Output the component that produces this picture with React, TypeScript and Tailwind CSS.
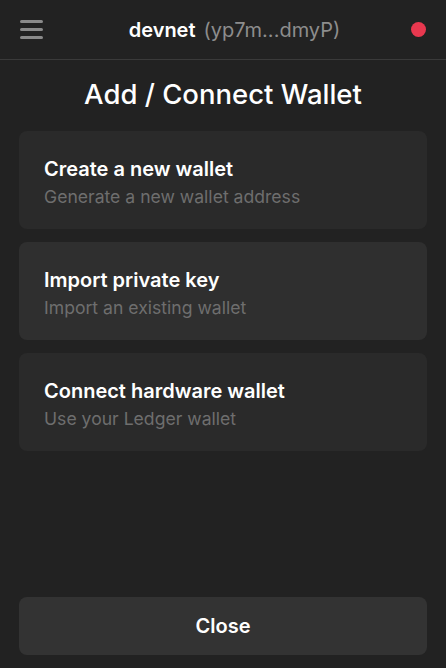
const OPTIONS = [
  { title: 'Create a new wallet', sub: 'Generate a new wallet address', active: false },
  { title: 'Import private key', sub: 'Import an existing wallet', active: true },
  { title: 'Connect hardware wallet', sub: 'Use your Ledger wallet', active: false },
]

export default function App() {
  return (
    <div className="w-[446px] h-[668px] bg-[#222222] flex flex-col text-white" style={{ fontFamily: 'Inter, "Noto Sans", sans-serif' }}>
      {/* Header */}
      <div className="h-[60px] flex items-center px-5 border-b border-[#3a3a3a] relative shrink-0">
        <div className="flex flex-col gap-[5px] w-[23px]">
          <span className="h-[3px] bg-[#8a8a8a] rounded-full" />
          <span className="h-[3px] bg-[#8a8a8a] rounded-full" />
          <span className="h-[3px] bg-[#8a8a8a] rounded-full" />
        </div>
        <div className="flex-1 flex justify-center items-baseline gap-2 pl-[15px]">
          <span className="text-[20px] font-semibold">devnet</span>
          <span className="text-[20px] text-[#8d8d8d]">(yp7m...dmyP)</span>
        </div>
        <span className="w-[15px] h-[15px] rounded-full bg-[#e8384f]" />
      </div>

      <div className="flex-1 flex flex-col px-[19px]">
        <h1 className="text-center text-[27.5px] font-medium mt-[16px] mb-[18px] leading-[37px]">Add / Connect Wallet</h1>
        <div className="flex flex-col gap-[13px]">
          {OPTIONS.map((o) => (
            <div
              key={o.title}
              className={`h-[98px] rounded-lg px-[25px] pt-[6px] flex flex-col justify-center ${o.active ? 'bg-[#2f2f2f]' : 'bg-[#2a2a2a]'}`}
            >
              <div className="text-[20px] font-semibold leading-[27px]">{o.title}</div>
              <div className="text-[17.6px] text-[#6e6e6e] leading-[27px]">{o.sub}</div>
            </div>
          ))}
        </div>
        <div className="flex-1" />
        <button className="h-[58px] mb-[13px] rounded-lg bg-[#333333] text-[20px] font-semibold text-white">Close</button>
      </div>
    </div>
  )
}
